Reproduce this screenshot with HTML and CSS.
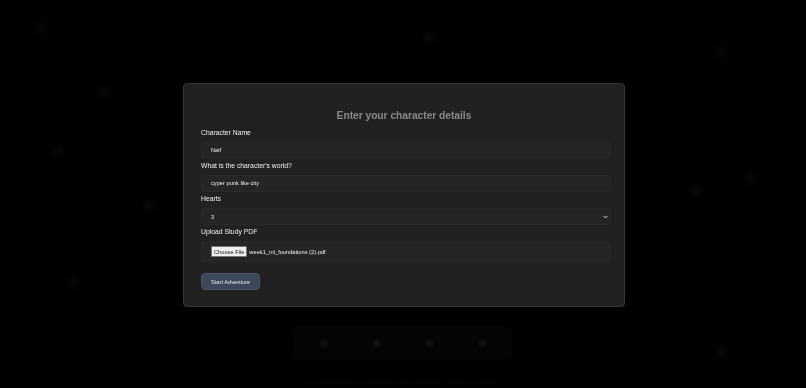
FILE: index.html
```html
<!DOCTYPE html>
<html>
<head>
  <title>Character Setup</title>
  <link rel="stylesheet" href="styles.css">
</head>
<body>
  <div class="scene">
    <span class="spark" style="left: 36px; top: 22px;"></span>
    <span class="spark" style="left: 424px; top: 32px;"></span>
    <span class="spark" style="left: 716px; top: 46px;"></span>
    <span class="spark" style="left: 99px; top: 85px;"></span>
    <span class="spark" style="left: 53px; top: 145px;"></span>
    <span class="spark" style="left: 144px; top: 200px;"></span>
    <span class="spark" style="left: 691px; top: 185px;"></span>
    <span class="spark" style="left: 746px; top: 173px;"></span>
    <span class="spark" style="left: 68px; top: 277px;"></span>
    <span class="spark" style="left: 716px; top: 345px;"></span>

    <div class="hotbar">
      <div class="slot"><span class="dot"></span></div>
      <div class="slot"><span class="dot"></span></div>
      <div class="slot"><span class="dot"></span></div>
      <div class="slot"><span class="dot"></span></div>
    </div>
    <div class="hint">Use the arrow keys to move around and press space to interact with objects</div>
  </div>

  <div class="overlay">
    <form class="modal">
      <h2 class="modal-title">Enter your character details</h2>

      <div class="field">
        <label class="field-label" for="char-name">Character Name</label>
        <input type="text" class="text-input" id="char-name" value="Naif">
      </div>

      <div class="field">
        <label class="field-label" for="char-world">What is the character's world?</label>
        <input type="text" class="text-input" id="char-world" value="cyper punk like city">
      </div>

      <div class="field">
        <label class="field-label" for="hearts">Hearts</label>
        <div class="select-wrap">
          <select id="hearts" class="text-input">
            <option>1</option>
            <option>2</option>
            <option selected>3</option>
            <option>4</option>
            <option>5</option>
          </select>
          <svg class="chevron" viewBox="0 0 8 5" width="5" height="4">
            <path d="M1 1l3 3 3-3" fill="none" stroke="#e6e6e6" stroke-width="1.6"/>
          </svg>
        </div>
      </div>

      <div class="field">
        <label class="field-label" for="study-pdf">Upload Study PDF</label>
        <div class="file-input">
          <span class="file-btn">Choose File</span>
          <span class="file-name">week1_ml_foundations (2).pdf</span>
          <input type="file" id="study-pdf" accept=".pdf">
        </div>
      </div>

      <button type="button" class="start-btn">Start Adventure</button>
    </form>
  </div>
</body>
</html>
```

FILE: styles.css
```css
html, body {
  margin: 0;
  padding: 0;
  height: 100%;
}

body {
  font-family: "Liberation Sans", Arial, Helvetica, sans-serif;
  background-color: #010101;
  color: #ececec;
  overflow: hidden;
}

/* game scene behind the dialog */
.scene {
  position: relative;
  height: 100%;
  display: flex;
  flex-direction: column;
  align-items: center;
  justify-content: flex-end;
  padding-bottom: 3px;
  box-sizing: border-box;
}

.spark {
  position: absolute;
  width: 10px;
  height: 12px;
  border-radius: 50%;
  background-color: #121212;
  filter: blur(3px);
}

.hotbar {
  display: flex;
  width: 220px;
  height: 34px;
  box-sizing: border-box;
  padding: 0 5px;
  background-color: #080808;
  border-radius: 6px;
  margin-bottom: 19px;
}

.slot {
  flex: 1;
  display: flex;
  align-items: center;
  justify-content: center;
  border-right: 1px solid #060606;
}

.slot:last-child {
  border-right: none;
}

.dot {
  width: 7px;
  height: 7px;
  border-radius: 50%;
  background-color: #262626;
  filter: blur(1.5px);
}

.hint {
  font-size: 5.7px;
  color: #111;
}

/* dialog */
.overlay {
  position: fixed;
  inset: 0;
  display: flex;
  align-items: center;
  justify-content: center;
  background-color: rgba(0, 0, 0, 0.5);
}

.modal {
  width: 442px;
  box-sizing: border-box;
  margin: 2px 0 0 2px;
  padding: 26px 17px 16px 17px;
  background-color: #212121;
  border: 1px solid #353535;
  border-radius: 4px;
  box-shadow: 0 0 12px rgba(0, 0, 0, 0.6);
}

.modal-title {
  margin: 0 0 7px 0;
  font-size: 10.2px;
  line-height: 12px;
  font-weight: bold;
  text-align: center;
  color: #8a8a8a;
}

.field {
  margin-bottom: 3.3px;
}

.field-label {
  display: block;
  font-size: 6.8px;
  line-height: 8px;
  margin-bottom: 5px;
  color: #f0f0f0;
}

.text-input {
  display: block;
  width: calc(100% + 4px);
  height: 17px;
  box-sizing: border-box;
  padding: 0 0 0 9px;
  font-family: inherit;
  font-size: 5.7px;
  color: #ededed;
  background-color: #252525;
  border: 1px solid #292929;
  border-radius: 3px;
  outline: none;
}

.select-wrap {
  position: relative;
}

.select-wrap select {
  appearance: none;
  -webkit-appearance: none;
}

.chevron {
  position: absolute;
  top: 7px;
  right: -1px;
}

.file-input {
  display: flex;
  align-items: center;
  width: calc(100% + 4px);
  height: 20.5px;
  box-sizing: border-box;
  padding-left: 9px;
  background-color: #252525;
  border: 1px solid #292929;
  border-radius: 3px;
  font-size: 5.7px;
  color: #ededed;
}

.file-input input {
  display: none;
}

.file-btn {
  display: inline-block;
  padding: 1.5px 2px;
  line-height: 6px;
  color: #111;
  background-color: #efefef;
  border: 1px solid #767676;
  border-radius: 1px;
  margin-right: 2px;
}

.start-btn {
  display: block;
  margin-top: 11.5px;
  height: 17px;
  padding: 0 9px;
  font-family: inherit;
  font-size: 5.7px;
  color: #e4e8ef;
  background-color: #3c4859;
  border: 1px solid #485569;
  border-radius: 4px;
  cursor: pointer;
}
```
